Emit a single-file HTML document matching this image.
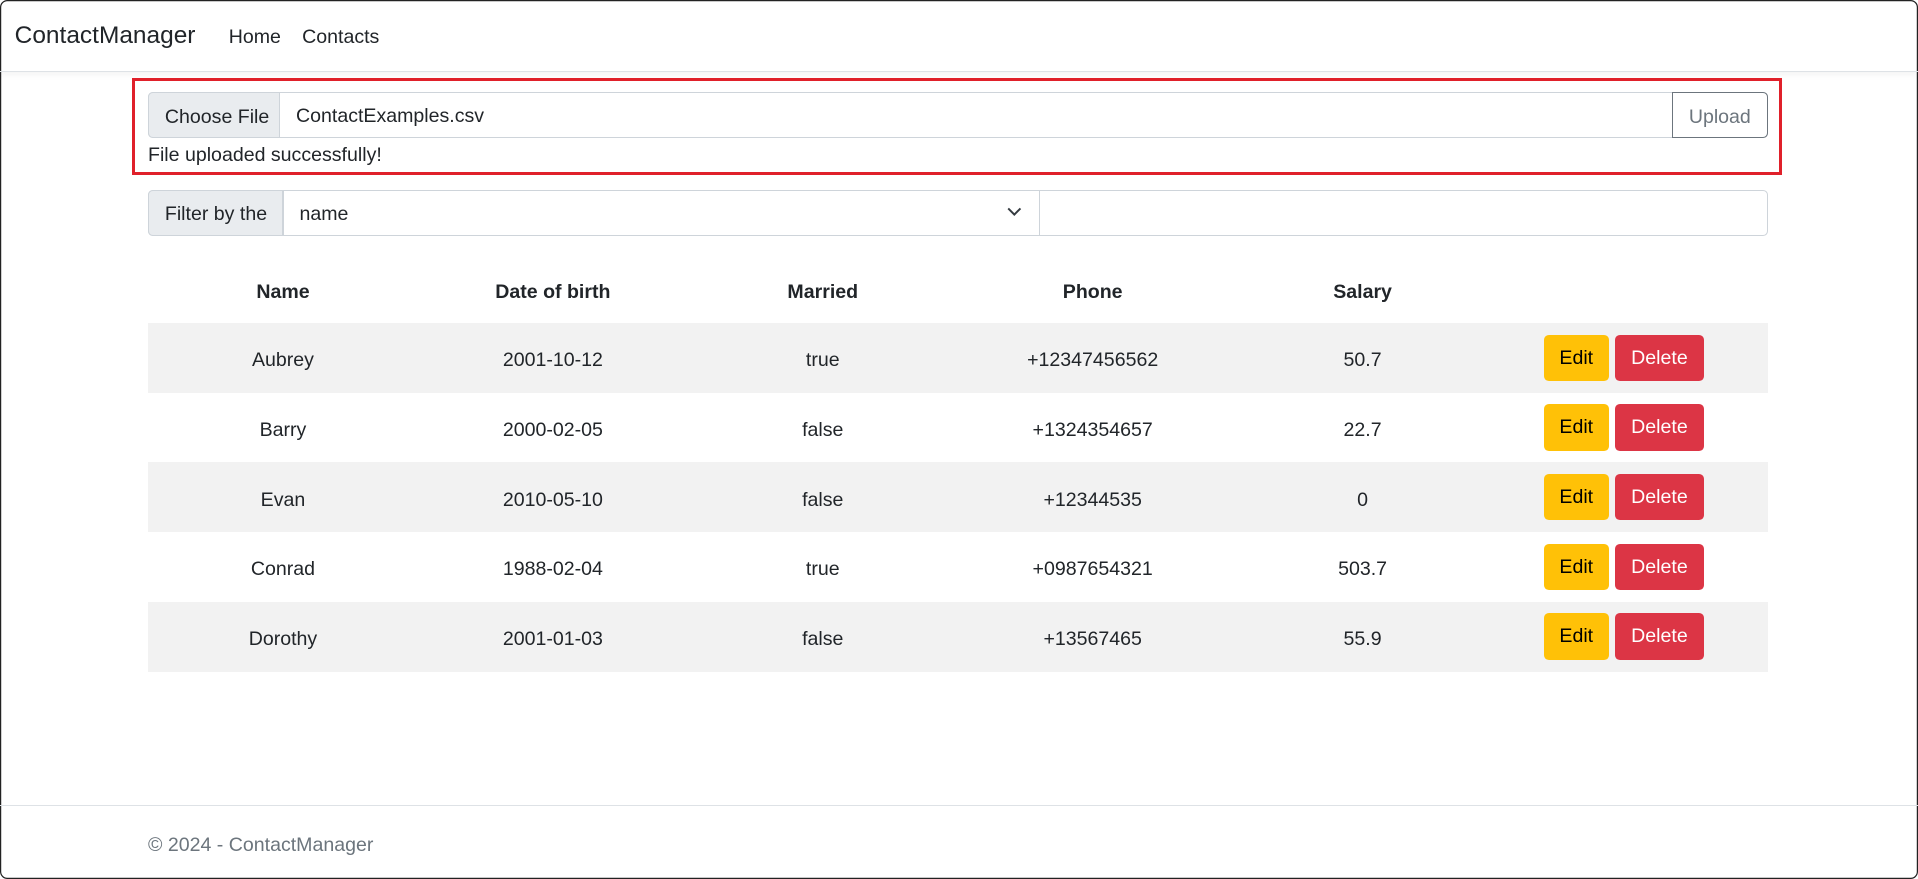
<!DOCTYPE html>
<html><head><meta charset="utf-8">
<style>
html,body{margin:0;padding:0;background:#fff;}
body{width:1918px;height:879px;overflow:hidden;font-family:"Liberation Sans",sans-serif;color:#212529;}
#z{zoom:1.2232;width:1568px;height:719px;position:relative;box-sizing:border-box;box-shadow:inset 0 0 0 1px #222;border-radius:6px;overflow:hidden;}
.nav{position:absolute;left:0;top:0;width:100%;height:58px;border-bottom:1px solid #dee2e6;box-shadow:0 2px 6px rgba(0,0,0,.06);}
.brand{position:absolute;left:12px;top:18px;font-size:20px;}
.nl{position:absolute;top:21px;font-size:16px;}
.ab{position:absolute;box-sizing:border-box;}
.grp{font-size:16px;display:flex;align-items:center;}
table{border-collapse:collapse;position:absolute;left:121px;top:214px;width:1324px;table-layout:fixed;font-size:16px;}
th{height:50px;font-weight:bold;text-align:center;padding:0;}
td{height:57px;text-align:center;padding:0;box-sizing:border-box;}
td.t{padding-top:5px;}
td.a{padding-right:14px;}
tr.s td{background:#f2f2f2;}
.be,.bd{display:inline-block;height:38px;line-height:38px;border-radius:4px;font-size:16px;vertical-align:middle;}
.be{background:#ffc107;color:#000;width:53px;}
.bd{background:#dc3545;color:#fff;width:73px;margin-left:5px;}
</style></head><body><div id="z">
<div class="nav"><span class="brand">ContactManager</span><span class="nl" style="left:187px">Home</span><span class="nl" style="left:247px">Contacts</span></div>
<div class="ab" style="left:108px;top:64px;width:1349px;height:79px;border:3px solid #e0202a;"></div>
<div class="ab" style="left:121px;top:75px;width:1324px;height:38px;border:1px solid #ced4da;border-radius:4px;"></div>
<div class="ab grp" style="left:121px;top:75px;width:108px;height:38px;background:#e9ecef;border:1px solid #ced4da;border-radius:4px 0 0 4px;padding-left:13px;padding-top:4px;">Choose File</div>
<div class="ab grp" style="left:242px;top:76px;height:38px;">ContactExamples.csv</div>
<div class="ab grp" style="left:1367px;top:75px;width:78px;height:38px;border:1px solid #6c757d;border-radius:0 4px 4px 0;color:#6c757d;justify-content:center;padding-top:4px;">Upload</div>
<div class="ab" style="left:121px;top:118px;font-size:16px;">File uploaded successfully!</div>
<div class="ab" style="left:121px;top:155px;width:1324px;height:38px;border:1px solid #ced4da;border-radius:4px;"></div>
<div class="ab grp" style="left:121px;top:155px;width:110px;height:38px;background:#e9ecef;border:1px solid #ced4da;border-radius:4px 0 0 4px;padding-left:13px;padding-top:3px;">Filter by the</div>
<div class="ab grp" style="left:231px;top:155px;width:619px;height:38px;border:1px solid #ced4da;padding-left:13px;padding-top:3px;">name
<svg style="position:absolute;right:14px;top:13px" width="12" height="9" viewBox="0 0 12 9"><path d="M1 2l5 5 5-5" fill="none" stroke="#343a40" stroke-width="1.6"/></svg></div>
<table>
<tr><th style="height:50px">Name</th><th>Date of birth</th><th>Married</th><th>Phone</th><th>Salary</th><th></th></tr>
<tr class="s"><td class="t">Aubrey</td><td class="t">2001-10-12</td><td class="t">true</td><td class="t">+12347456562</td><td class="t">50.7</td><td class="a"><span class="be">Edit</span><span class="bd">Delete</span></td></tr>
<tr><td class="t">Barry</td><td class="t">2000-02-05</td><td class="t">false</td><td class="t">+1324354657</td><td class="t">22.7</td><td class="a"><span class="be">Edit</span><span class="bd">Delete</span></td></tr>
<tr class="s"><td class="t">Evan</td><td class="t">2010-05-10</td><td class="t">false</td><td class="t">+12344535</td><td class="t">0</td><td class="a"><span class="be">Edit</span><span class="bd">Delete</span></td></tr>
<tr><td class="t">Conrad</td><td class="t">1988-02-04</td><td class="t">true</td><td class="t">+0987654321</td><td class="t">503.7</td><td class="a"><span class="be">Edit</span><span class="bd">Delete</span></td></tr>
<tr class="s"><td class="t">Dorothy</td><td class="t">2001-01-03</td><td class="t">false</td><td class="t">+13567465</td><td class="t">55.9</td><td class="a"><span class="be">Edit</span><span class="bd">Delete</span></td></tr>
</table>
<div class="ab" style="left:0;top:658px;width:100%;border-top:1px solid #dee2e6;"></div>
<div class="ab" style="left:121px;top:682px;font-size:16px;color:#6c757d;">© 2024 - ContactManager</div>
</div></body></html>
